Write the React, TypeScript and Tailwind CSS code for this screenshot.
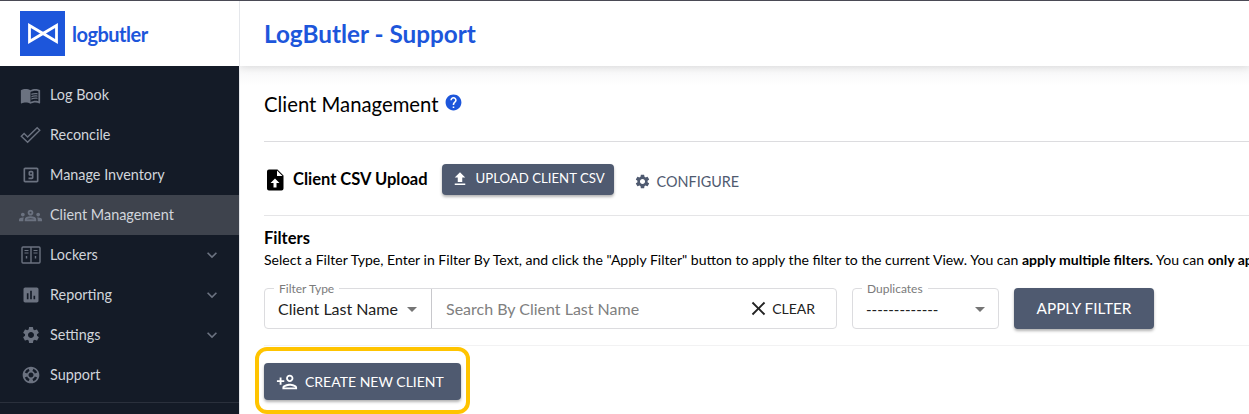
import React from "react";
import {
  MdMenuBook, MdOutlineGroups, MdAssessment, MdSettings, MdSupport, MdHelp,
  MdFileUpload, MdClose, MdOutlinePersonAdd, MdArrowDropDown, MdExpandMore,
} from "react-icons/md";

function Nine({ className }: { className?: string }) {
  return (
    <svg viewBox="0 0 24 24" fill="currentColor" className={className}>
      <path d="M19 3H5c-1.1 0-2 .9-2 2v14c0 1.1.9 2 2 2h14c1.1 0 2-.9 2-2V5c0-1.1-.9-2-2-2zm0 16H5V5h14v14zm-4-4V9c0-1.1-.9-2-2-2h-2c-1.11 0-2 .9-2 2v2c0 1.1.89 2 2 2h2v2H9v2h4c1.1 0 2-.9 2-2zm-4-4V9h2v2h-2z" />
    </svg>
  );
}

function Locker({ className }: { className?: string }) {
  return (
    <svg viewBox="0 0 20 18" fill="none" stroke="currentColor" className={className}>
      <rect x="1" y="1" width="18" height="16" rx="1" strokeWidth="1.4" />
      <path d="M10 1v16" strokeWidth="1.4" />
      <path d="M3.5 4.5h4M12.5 4.5h4M3.5 7h4M12.5 7h4" strokeWidth="1.1" />
      <path d="M5.5 10v2.5M14.5 10v2.5" strokeWidth="1.4" />
    </svg>
  );
}

function OutlineCheck({ className }: { className?: string }) {
  return (
    <svg viewBox="0 0 24 20" fill="none" stroke="currentColor" strokeWidth="1.6" strokeLinejoin="miter" className={className}>
      <path d="M1.5 11.5l3.2-3.2 4 4L19.6 1.6l3 3L8.7 18.2z" />
    </svg>
  );
}

function FileUp({ className }: { className?: string }) {
  return (
    <svg viewBox="0 0 24 24" className={className}>
      <path fill="currentColor" d="M6 1.5h8.5L20.5 7.5V20.5a2 2 0 0 1-2 2H6a2 2 0 0 1-2-2v-17a2 2 0 0 1 2-2z" />
      <path fill="#fff" d="M14 2.5l5.5 5.5H14z" />
      <path fill="#fff" d="M12 10.5l4.5 4.5h-3v4.5h-3V15h-3z" />
    </svg>
  );
}

const items = [
  { label: "Log Book", Icon: MdMenuBook, size: "w-[21px] h-[21px]" },
  { label: "Reconcile", Icon: OutlineCheck, size: "w-[21px] h-[18px]" },
  { label: "Manage Inventory", Icon: Nine, size: "size-[20px]" },
  { label: "Client Management", Icon: MdOutlineGroups, size: "size-[23px]", active: true },
  { label: "Lockers", Icon: Locker, size: "w-[20px] h-[18px]", more: true },
  { label: "Reporting", Icon: MdAssessment, size: "size-[20px]", more: true },
  { label: "Settings", Icon: MdSettings, size: "size-[20px]", more: true },
  { label: "Support", Icon: MdSupport, size: "size-[20px]" },
];

function Sidebar() {
  return (
    <aside className="flex w-[240px] shrink-0 flex-col border-r border-[#e5e7eb]">
      <div className="flex h-[65px] items-center bg-white pl-5">
        <div className="flex size-[45px] items-center justify-center bg-[#1d56db]">
          <svg viewBox="0 0 30 21" className="h-[21px] w-[30px]" fill="none" stroke="#fff" strokeWidth="2.8">
            <path d="M1.5 2.5v16L15 10.5 28.5 18.5v-16L15 10.5z" strokeLinejoin="miter" />
          </svg>
        </div>
        <span className="ml-[7px] text-[20px] font-bold tracking-[-0.5px] text-[#1d56db]">logbutler</span>
      </div>
      <nav className="flex flex-1 flex-col bg-[#141b27]">
        <div className="h-[9px]" />
        {items.map(({ label, Icon, size, active, more }) => (
          <div key={label} className={`flex h-10 items-center pr-[17px] ${active ? "bg-[#3e434d]" : ""}`}>
            <span className="ml-[20px] flex w-[21px] justify-center text-[#6b7280]">
              <Icon className={`${size} shrink-0`} />
            </span>
            <span className="ml-[9px] flex-1 text-[14.4px] text-[#d1d5db]">{label}</span>
            {more && <MdExpandMore className="size-[20px] text-[#6b7280]" />}
          </div>
        ))}
        <div className="mt-[7px] border-t border-[#2a303c]" />
      </nav>
    </aside>
  );
}

function Legend({ children }: { children: React.ReactNode }) {
  return (
    <span className="absolute -top-[7px] left-[9px] bg-white px-[5px] text-[12px] leading-[14px] text-[#7b7b7b]">
      {children}
    </span>
  );
}

export default function App() {
  return (
    <div className="flex h-[414px] w-[1249px] flex-col overflow-hidden bg-white font-['Lato',sans-serif]">
      <div className="h-px shrink-0 bg-[#4a4a55]" />
      <div className="flex min-h-0 flex-1">
        <Sidebar />
        <main className="min-w-0 flex-1 overflow-hidden">
          <header className="relative flex h-[65px] items-center bg-white pl-6 pt-[2px] shadow-[0_1px_8px_rgba(0,0,0,0.12)]">
            <h1 className="text-[24.3px] font-bold text-[#1d56db]">LogButler - Support</h1>
          </header>
          <div className="bg-gradient-to-b from-[#f6f6f7] to-white to-[20px] pl-6">
            <div className="flex h-[75px] items-center pt-[2px]">
              <h2 className="text-[20.3px] text-black">Client Management</h2>
              <MdHelp className="ml-[6px] size-[19px] -translate-y-[2px] text-[#1d56db]" />
            </div>
            <div className="border-t border-[#dcdcdf]" />
            <div className="flex h-[73px] items-center">
              <FileUp className="-ml-[1px] mt-[2px] size-[24px] text-black" />
              <span className="ml-[6px] mt-[2px] text-[16.5px] font-bold text-black">Client CSV Upload</span>
              <button className="ml-[14px] mt-[1px] flex h-[31px] w-[172px] items-center rounded-[4px] bg-[#4f5a70] pl-[9px] text-[13.2px] text-white shadow-[0_2px_3px_rgba(0,0,0,0.3)]">
                <MdFileUpload className="size-[18px]" />
                <span className="ml-[7px]">UPLOAD CLIENT CSV</span>
              </button>
              <div className="ml-[20px] mt-[7px] flex items-center text-[14.4px] text-[#4f5a70]">
                <MdSettings className="size-[17px]" />
                <span className="ml-[6px]">CONFIGURE</span>
              </div>
            </div>
            <div className="w-[1200px] border-t border-[#e5e5e7]" />
            <div className="pt-[12px]">
              <div className="text-[16.5px] font-bold leading-[21px] text-black">Filters</div>
              <p className="whitespace-nowrap text-[14.05px] leading-[22px] text-black">
                Select a Filter Type, Enter in Filter By Text, and click the "Apply Filter" button to apply the filter to the current View. You can{" "}
                <b>apply multiple filters.</b> You can <b>only apply</b>
              </p>
            </div>
            <div className="mt-[17px] flex h-[41px] items-stretch">
              <div className="flex w-[573px] rounded-[4px] border border-[#dcdcdf]">
                <div className="relative flex w-[167px] items-center border-r border-[#c8c8cc] pl-[13px]">
                  <Legend>Filter Type</Legend>
                  <span className="text-[16px] text-[#222]">Client Last Name</span>
                  <MdArrowDropDown className="ml-[2px] size-[24px] text-[#757575]" />
                </div>
                <div className="flex flex-1 items-center pl-[14px] pr-[21px]">
                  <span className="flex-1 text-[16px] text-[#808080]">Search By Client Last Name</span>
                  <MdClose className="mr-[2px] size-[23px] text-[#222]" />
                  <span className="text-[14px] text-[#222]">CLEAR</span>
                </div>
              </div>
              <div className="relative ml-[15px] flex w-[147px] items-center rounded-[4px] border border-[#dcdcdf] pl-[13px] pr-[6px]">
                <Legend>Duplicates</Legend>
                <span className="flex-1 pt-[2px] text-[15px] text-[#222]">-------------</span>
                <MdArrowDropDown className="size-[24px] text-[#757575]" />
              </div>
              <button className="ml-[15px] w-[140px] rounded-[4px] bg-[#4f5a70] text-[15.3px] text-white shadow-[0_2px_3px_rgba(0,0,0,0.3)]">
                APPLY FILTER
              </button>
            </div>
            <div className="mt-[16px] border-t border-[#f2f2f3]" />
            <div className="ml-[-9px] mt-px w-[215px] rounded-[12px] border-[4px] border-[#ffc400] px-[5px] pb-[10px] pt-[12px]">
              <button className="flex h-[37px] w-[197px] items-center rounded-[4px] bg-[#4f5a70] pl-[12px] text-[14px] text-white shadow-[0_2px_3px_rgba(0,0,0,0.3)]">
                <MdOutlinePersonAdd className="size-[22px]" />
                <span className="ml-[7px]">CREATE NEW CLIENT</span>
              </button>
            </div>
          </div>
        </main>
      </div>
    </div>
  );
}
